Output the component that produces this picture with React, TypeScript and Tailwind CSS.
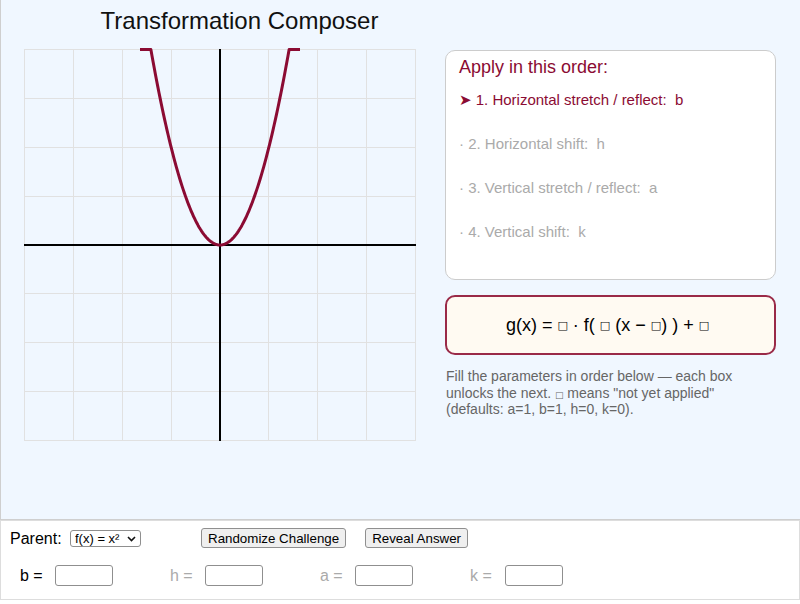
import React from "react";

const CRIMSON = "#8b0b33";

function Graph() {
  const cell = 48.875;
  const unit = cell / 2;
  const ticks = Array.from({ length: 9 }, (_, i) => Math.round(i * cell) + 0.5);
  const ox = 196;
  const oy = 196;
  const xmax = Math.sqrt(8);
  const pts: string[] = [];
  pts.push(`${ox - 80},${oy - 8 * unit}`);
  const steps = 120;
  for (let i = 0; i <= steps; i++) {
    const x = -xmax + (2 * xmax * i) / steps;
    pts.push(`${(ox + x * unit).toFixed(2)},${(oy - x * x * unit).toFixed(2)}`);
  }
  pts.push(`${ox + 80},${oy - 8 * unit}`);

  return (
    <svg width={392} height={392} viewBox="0 0 392 392" className="block overflow-visible shrink-0">
      {ticks.map((t) => (
        <line key={`v${t}`} x1={t} y1={0} x2={t} y2={392} stroke="#e1e1e1" strokeWidth={1} />
      ))}
      {ticks.map((t) => (
        <line key={`h${t}`} x1={0} y1={t} x2={392} y2={t} stroke="#e1e1e1" strokeWidth={1} />
      ))}
      <line x1={0} y1={oy} x2={392} y2={oy} stroke="#000" strokeWidth={2} />
      <line x1={ox} y1={0} x2={ox} y2={392} stroke="#000" strokeWidth={2} />
      <polyline
        points={pts.join(" ")}
        fill="none"
        stroke={CRIMSON}
        strokeWidth={3}
        strokeLinejoin="round"
      />
    </svg>
  );
}

const steps = [
  "1. Horizontal stretch / reflect:  b",
  "2. Horizontal shift:  h",
  "3. Vertical stretch / reflect:  a",
  "4. Vertical shift:  k",
];

// placeholder box for a parameter that has not been applied yet
function Blank({ small }: { small?: boolean }) {
  return (
    <span
      className={`inline-block align-baseline leading-none font-['DejaVu_Sans',sans-serif] ${
        small ? "text-[9px]" : "text-[11px]"
      }`}
    >
      □
    </span>
  );
}

function ParamInput({ label, active }: { label: string; active: boolean }) {
  return (
    <div className="w-[150px] flex items-center shrink-0">
      <span className={`w-[35px] text-[16px] ${active ? "text-black" : "text-[#aaaaaa]"}`}>{label}</span>
      <input
        type="text"
        className="w-[58px] h-[21px] border border-[#8f8f8f] rounded-[3px] bg-white px-1 text-[13px] outline-none"
      />
    </div>
  );
}

export default function App() {
  return (
    <div className="w-[800px] h-[604px] bg-white text-black font-['Liberation_Sans','Arial','DejaVu_Sans',sans-serif] overflow-hidden">
      <div className="h-[520px] w-[800px] bg-[#f0f7ff] border-l border-b border-[#cfcfcf]">
        <h1 className="w-[477px] text-center text-[24px] leading-[32px] pt-[5px] font-normal text-[#111]">
          Transformation Composer
        </h1>
        <div className="flex mt-[12px]">
          <div className="ml-[23px]">
            <Graph />
          </div>
          <div className="ml-[29px] mt-[1px] w-[331px]">
            <div className="h-[230px] bg-white border border-[#cccccc] rounded-[10px] px-[13px] pt-[5px]">
              <div className="text-[18px] leading-[22px]" style={{ color: CRIMSON }}>
                Apply in this order:
              </div>
              {steps.map((s, i) => (
                <div
                  key={s}
                  className={`text-[15px] leading-[44px] whitespace-pre ${i === 0 ? "" : "text-[#aaaaaa]"}`}
                  style={i === 0 ? { color: CRIMSON } : undefined}
                >
                  {i === 0 ? `➤ ${s}` : `· ${s}`}
                </div>
              ))}
            </div>
            <div className="mt-[15px] h-[60px] bg-[#fffaf2] border-2 border-[#9a2a48] rounded-[10px] flex items-center justify-center text-[18px] text-black whitespace-pre pr-[6px]">
              g(x) = <Blank /> · f( <Blank /> (x − <Blank />) ) + <Blank />
            </div>
            <div className="mt-[13px] text-[14px] leading-[16.5px] text-[#666666] pl-[1px]">
              <div>Fill the parameters in order below — each box</div>
              <div>
                unlocks the next. <Blank small /> means "not yet applied"
              </div>
              <div>(defaults: a=1, b=1, h=0, k=0).</div>
            </div>
          </div>
        </div>
      </div>
      <div className="h-[80px] w-[800px] border border-[#dddddd] bg-white">
        <div className="flex items-center h-[20px] mt-[7px] pl-[9px]">
          <span className="w-[60px] text-[16px] translate-y-[1px]">Parent:</span>
          <div className="relative w-[71px] h-[17px]">
            <select className="block appearance-none w-full h-full border border-[#8f8f8f] rounded-[3px] bg-white text-[13px] leading-[15px] pl-[4px] py-0 text-black outline-none">
              <option>f(x) = x²</option>
            </select>
            <svg
              className="absolute right-[5px] top-[6px] pointer-events-none"
              width={9}
              height={6}
              viewBox="0 0 9 6"
            >
              <path d="M1 1 L4.5 4.5 L8 1" fill="none" stroke="#111" strokeWidth={1.6} />
            </svg>
          </div>
          <button className="ml-[60px] h-[20px] px-[6px] border border-[#8f8f8f] rounded-[3px] bg-[#efefef] text-[13.33px] text-black">
            Randomize Challenge
          </button>
          <button className="ml-[19px] h-[20px] px-[6px] border border-[#8f8f8f] rounded-[3px] bg-[#efefef] text-[13.33px] text-black">
            Reveal Answer
          </button>
        </div>
        <div className="flex items-center h-[21px] mt-[17px] pl-[19px]">
          <ParamInput label="b =" active />
          <ParamInput label="h =" active={false} />
          <ParamInput label="a =" active={false} />
          <ParamInput label="k =" active={false} />
        </div>
      </div>
    </div>
  );
}
